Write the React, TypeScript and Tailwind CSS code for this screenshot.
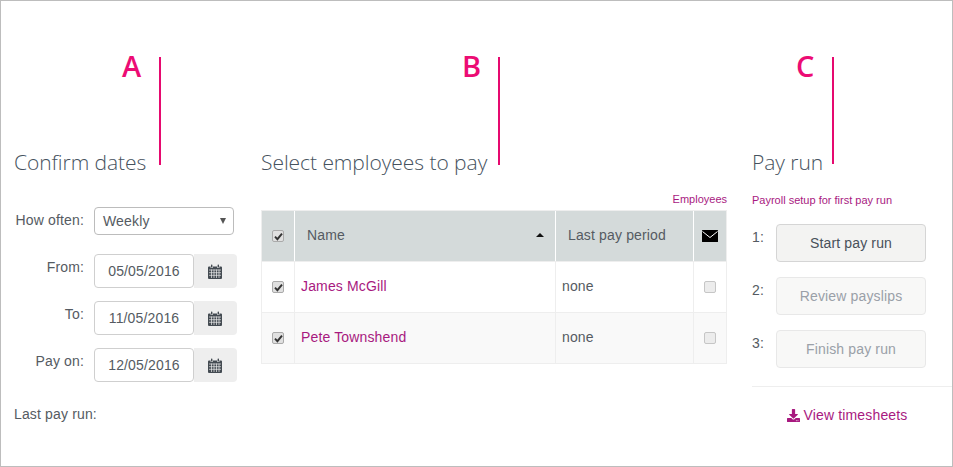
import React from "react";
import { FaDownload } from "react-icons/fa";

const dates = [
  { label: "From:", value: "05/05/2016" },
  { label: "To:", value: "11/05/2016" },
  { label: "Pay on:", value: "12/05/2016" },
];

const employees = [
  { name: "James McGill", last: "none", striped: false },
  { name: "Pete Townshend", last: "none", striped: true },
];

const steps = [
  { n: "1:", label: "Start pay run", active: true },
  { n: "2:", label: "Review payslips", active: false },
  { n: "3:", label: "Finish pay run", active: false },
];

const marks = [
  { letter: "A", letterClass: "left-[121px]", lineClass: "left-[158px] h-[108px]" },
  { letter: "B", letterClass: "left-[461px]", lineClass: "left-[497px] h-[108px]" },
  { letter: "C", letterClass: "left-[795px]", lineClass: "left-[831px] h-[107px]" },
];

const CalendarIcon = () => (
  <svg width="14" height="15" viewBox="0 0 14 15" className="text-[#444b52]" fill="currentColor">
    <path d="M1 2.5h1.6v1.6h2.2V2.5h4.4v1.6h2.2V2.5H13a1 1 0 0 1 1 1V14a1 1 0 0 1-1 1H1a1 1 0 0 1-1-1V3.5a1 1 0 0 1 1-1z" />
    <rect x="3" y="0.5" width="1.4" height="3" rx="0.6" />
    <rect x="9.6" y="0.5" width="1.4" height="3" rx="0.6" />
    <path
      d="M1 6h12M1 8.7h12M1 11.3h12M3.5 5.5V14M6 5.5V14M8.5 5.5V14M11 5.5V14"
      stroke="#eee"
      strokeWidth="0.7"
      fill="none"
    />
  </svg>
);

const EnvelopeIcon = () => (
  <svg width="16" height="12" viewBox="0 0 16 12">
    <rect width="16" height="12" rx="0.5" fill="#000" />
    <path d="M0.5 1.5 8 7.5l7.5-6" stroke="#fff" strokeWidth="1" fill="none" />
  </svg>
);

const Check = ({ checked }: { checked: boolean }) => (
  <span
    className={`flex h-[12px] w-[12px] items-center justify-center rounded-[2px] border ${
      checked ? "border-[#aaaaaa] bg-[#e0e0e0]" : "border-[#c6c6c6] bg-[#ececec]"
    }`}
  >
    {checked && (
      <svg width="9" height="9" viewBox="0 0 9 9">
        <path d="M1 4.6 3.4 7.2 8 1.6" stroke="#333" strokeWidth="1.9" fill="none" />
      </svg>
    )}
  </span>
);

export default function App() {
  return (
    <div className="relative flex h-[467px] w-[953px] overflow-hidden border border-[#bdbdbd] bg-white pt-[148px] font-['Liberation_Sans',Arial,sans-serif] text-[14px] tracking-[0.15px] text-[#555b62]">
      {marks.map((m) => (
        <React.Fragment key={m.letter}>
          <span
            className={`absolute top-[47px] font-['Open_Sans',sans-serif] text-[29px] leading-[36px] font-semibold tracking-normal text-[#ec0c74] ${m.letterClass}`}
          >
            {m.letter}
          </span>
          <span className={`absolute top-[56px] w-[2px] bg-[#e6096f] ${m.lineClass}`} />
        </React.Fragment>
      ))}

      {/* confirm dates */}
      <div className="ml-[13px] w-[223px] shrink-0">
        <h2 className="h-[29px] font-['Open_Sans',sans-serif] text-[21px] leading-[26px] font-light tracking-[-0.05px] text-[#46525e]">
          Confirm dates
        </h2>
        <div className="mt-[29px] flex items-start">
          <span className="w-[70px] pt-[5px] text-right leading-[16px]">How often:</span>
          <div className="relative ml-[10px] flex h-[28px] w-[140px] items-center rounded-[4px] border border-[#bcbcbc] pl-[8px]">
            Weekly
            <span className="absolute top-[10px] right-[7px] h-0 w-0 border-x-[3.5px] border-t-[6px] border-x-transparent border-t-[#555]" />
          </div>
        </div>
        <div className="mt-[19px] flex flex-col gap-[13px]">
          {dates.map((d) => (
            <div key={d.label} className="flex items-start">
              <span className="w-[70px] pt-[5px] text-right leading-[16px]">{d.label}</span>
              <span className="ml-[10px] flex h-[34px] w-[100px] items-center justify-center rounded-[4px] border border-[#cfcfcf] text-[#555b62]">
                {d.value}
              </span>
              <span className="flex h-[34px] w-[43px] items-center justify-center rounded-r-[4px] bg-[#eeeeee] pr-[2px]">
                <CalendarIcon />
              </span>
            </div>
          ))}
        </div>
        <p className="mt-[24px] leading-[16px]">Last pay run:</p>
      </div>

      {/* employees */}
      <div className="ml-[24px] w-[466px] shrink-0">
        <h2 className="h-[29px] font-['Open_Sans',sans-serif] text-[21px] leading-[26px] font-light tracking-[-0.05px] text-[#46525e]">
          Select employees to pay
        </h2>
        <div className="mt-[14px] h-[18px] text-right text-[11px] leading-[14px] tracking-normal text-[#a8197f]">
          Employees
        </div>
        <div className="border border-[#eeeeee]">
          <div className="flex h-[50px] bg-[#d4dada]">
            <div className="flex w-[33px] items-center justify-center border-r border-white">
              <Check checked />
            </div>
            <div className="flex w-[261px] items-center justify-between border-r border-white pr-[11px] pb-[2px] pl-[12px]">
              Name
              <span className="h-0 w-0 border-x-[4px] border-b-[4px] border-x-transparent border-b-[#111]" />
            </div>
            <div className="flex w-[138px] items-center border-r border-white pb-[2px] pl-[12px]">Last pay period</div>
            <div className="flex flex-1 items-center justify-center">
              <EnvelopeIcon />
            </div>
          </div>
          {employees.map((e) => (
            <div
              key={e.name}
              className={`flex h-[51px] border-t border-[#eeeeee] ${e.striped ? "bg-[#f9f9f9]" : "bg-white"}`}
            >
              <div className="flex w-[33px] items-center justify-center border-r border-[#eeeeee]">
                <Check checked />
              </div>
              <div className="flex w-[261px] items-center border-r border-[#eeeeee] pb-[2px] pl-[6px] text-[#a8197f]">
                {e.name}
              </div>
              <div className="flex w-[138px] items-center border-r border-[#eeeeee] pb-[2px] pl-[6px]">{e.last}</div>
              <div className="flex flex-1 items-center justify-center">
                <Check checked={false} />
              </div>
            </div>
          ))}
        </div>
      </div>

      {/* pay run */}
      <div className="ml-[25px] flex-1">
        <h2 className="h-[29px] font-['Open_Sans',sans-serif] text-[21px] leading-[26px] font-light tracking-[-0.05px] text-[#46525e]">
          Pay run
        </h2>
        <p className="mt-[15px] text-[11px] leading-[14px] tracking-normal text-[#a8197f]">
          Payroll setup for first pay run
        </p>
        <div className="mt-[17px] flex flex-col gap-[15px]">
          {steps.map((s) => (
            <div key={s.n} className="flex items-start">
              <span className="w-[24px] pt-[5px] leading-[16px]">{s.n}</span>
              <span
                className={`flex h-[38px] w-[150px] items-center justify-center rounded-[4px] border ${
                  s.active
                    ? "border-[#d5d5d5] bg-[#f3f3f2] text-[#48505a]"
                    : "border-[#e8e8e8] bg-[#f8f8f7] text-[#9aa0a8]"
                }`}
              >
                {s.label}
              </span>
            </div>
          ))}
        </div>
        <div className="mt-[18px] border-t border-[#eeeeee]" />
        <div className="mt-[20px] flex items-center justify-center gap-[4px] pr-[10px] leading-[16px] text-[#a8197f]">
          <FaDownload className="h-[13px] w-[13px]" />
          View timesheets
        </div>
      </div>
    </div>
  );
}
